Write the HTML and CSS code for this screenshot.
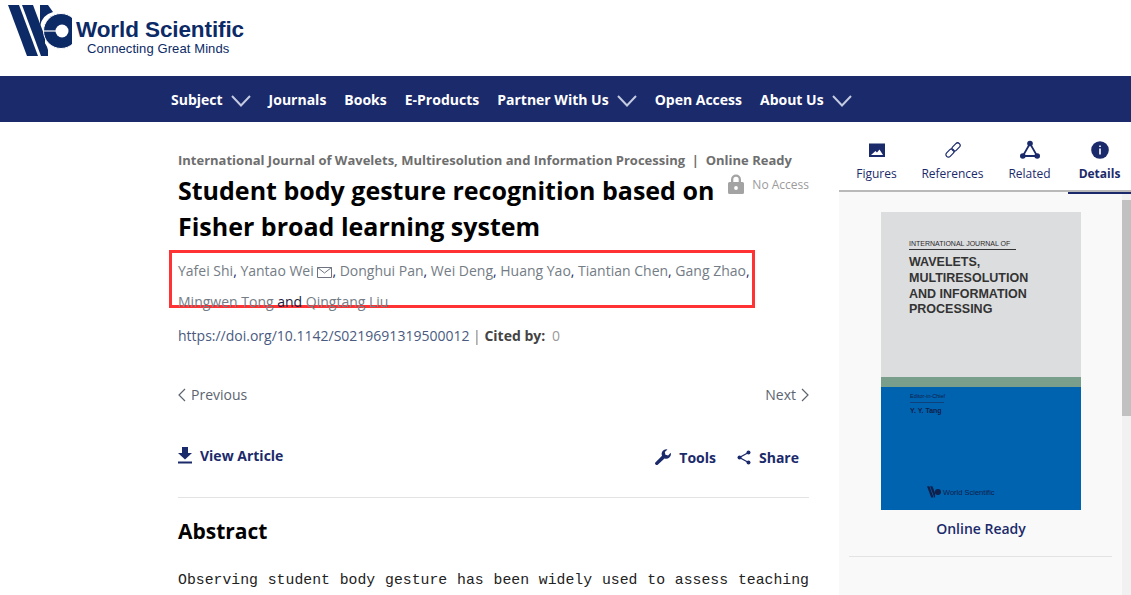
FILE: index.html
```html
<!DOCTYPE html>
<html lang="en">
<head>
<meta charset="utf-8">
<title>Student body gesture recognition based on Fisher broad learning system</title>
<link rel="stylesheet" href="styles.css">
</head>
<body>
<header class="brand">
  <svg class="mark" viewBox="0 0 64 54" width="64" height="54" aria-hidden="true">
    <path fill="#0c2a66" d="M0 1 H11 L30 52 H19 Z"/>
    <path fill="#0c2a66" d="M14 1 H25 L37 33 V52 H33 Z"/>
    <path fill="#0c2a66" d="M32 1 H40 L45 8 A18 18 0 0 0 32 22 Z"/>
    <path fill="#0c2a66" d="M40 52 V46 A18 18 0 0 0 34 36 V52 Z"/>
    <circle cx="53" cy="27" r="17.5" fill="#0c2a66" stroke="#fff" stroke-width="1"/>
    <circle cx="54" cy="27" r="6.5" fill="#fff"/>
    <path stroke="#fff" stroke-width="1.2" d="M35 27 H60"/>
  </svg>
  <div class="wordmark">
    <div class="word-title">World Scientific</div>
    <div class="word-sub">Connecting Great Minds</div>
  </div>
</header>

<nav class="nav">
  <a class="nav-item">Subject <svg class="chev" viewBox="0 0 20 12" width="20" height="12"><path d="M1 1 L10 10.5 L19 1"/></svg></a>
  <a class="nav-item">Journals</a>
  <a class="nav-item">Books</a>
  <a class="nav-item">E-Products</a>
  <a class="nav-item">Partner With Us <svg class="chev" viewBox="0 0 20 12" width="20" height="12"><path d="M1 1 L10 10.5 L19 1"/></svg></a>
  <a class="nav-item">Open Access</a>
  <a class="nav-item">About Us <svg class="chev" viewBox="0 0 20 12" width="20" height="12"><path d="M1 1 L10 10.5 L19 1"/></svg></a>
</nav>

<main class="layout">
  <article class="article">
    <div class="journal">International Journal of Wavelets, Multiresolution and Information Processing&nbsp; |&nbsp; Online Ready</div>
    <div class="title-row">
      <h1 class="title">Student body gesture recognition based on Fisher broad learning system</h1>
      <div class="access">
        <svg viewBox="0 0 16 20" width="16" height="20"><path fill="#a3a3a3" d="M3 8V5.5a5 5 0 0 1 10 0V8h1.5A1.5 1.5 0 0 1 16 9.500V18.500A1.500 1.500 0 0 1 14.500 20H1.500A1.500 1.500 0 0 1 0 18.500V9.500A1.500 1.500 0 0 1 1.500 8ZM5.300 8h5.400V5.500a2.700 2.700 0 0 0-5.400 0Z"/><circle cx="8" cy="14" r="1.900" fill="#fff"/></svg>
        <span>No Access</span>
      </div>
    </div>
    <div class="authors">
      <a>Yafei Shi</a>, <a>Yantao Wei</a>
      <svg class="mail" viewBox="0 0 15 11" width="15" height="11"><path fill="none" stroke="#6d7480" d="M.5.500h14v10H.500ZM.500.500 7.500 6l7-5.500"/></svg>, <a>Donghui Pan</a>, <a>Wei Deng</a>, <a>Huang Yao</a>, <a>Tiantian Chen</a>, <a>Gang Zhao</a>,<br>
      <a>Mingwen Tong</a> <span class="and">and</span> <a>Qingtang Liu</a>
    </div>
    <div class="doi"><a>https://doi.org/10.1142/S0219691319500012</a> <span class="pipe">|</span> <b>Cited by:</b> <span class="count">0</span></div>
    <div class="pager">
      <a class="pager-link"><svg viewBox="0 0 8 14" width="8" height="14"><path d="M7 1 1 7l6 6"/></svg> Previous</a>
      <a class="pager-link">Next <svg viewBox="0 0 8 14" width="8" height="14"><path d="M1 1l6 6-6 6"/></svg></a>
    </div>
    <div class="actions">
      <a class="action view"><svg viewBox="0 0 14 17" width="14" height="17"><path fill="#1b2a6b" d="M4 0h6v6h4L7 12.500 0 6h4ZM0 14.500h14V16.500H0Z"/></svg> View Article</a>
      <div class="tools">
        <a class="action"><svg viewBox="0 0 16 16" width="16" height="16"><path fill="#1b2a6b" d="M15.700 3.700a4.700 4.700 0 0 1-6.200 5.700L3 15.600a1.500 1.500 0 0 1-2.400-2.400L7 6.700A4.700 4.700 0 0 1 12.500.4L9.800 3.100l.6 2.700 2.700.6Z"/></svg> Tools</a>
        <a class="action"><svg viewBox="0 0 14 15" width="14" height="15"><g fill="#1b2a6b"><circle cx="11.500" cy="2.500" r="2"/><circle cx="2.500" cy="7.500" r="2"/><circle cx="11.500" cy="12.500" r="2"/></g><path fill="none" stroke="#1b2a6b" stroke-width="1.300" d="M11.500 2.500l-9 5 9 5"/></svg> Share</a>
      </div>
    </div>
    <h2 class="abstract-head">Abstract</h2>
    <p class="abstract">Observing student body gesture has been widely used to assess teaching performance and learning engagement in the classroom environment today.</p>
  </article>

  <aside class="side">
    <div class="tabs">
      <a class="tab">
        <svg viewBox="0 0 16 16" width="16" height="16"><path fill="#1b2a6b" fill-rule="evenodd" d="M0 1.500h16v13.500H0ZM2 13h12l-3.500-5.500-2.500 3-1.500-1.500Z"/></svg>
        <span>Figures</span>
      </a>
      <a class="tab">
        <svg viewBox="0 0 16 16" width="16" height="16"><g fill="none" stroke="#1b2a6b" stroke-width="1.200" transform="rotate(-45 8 8)"><rect x="-1" y="5.500" width="9.500" height="5" rx="2.500"/><rect x="7.500" y="5.500" width="9.500" height="5" rx="2.500"/></g></svg>
        <span>References</span>
      </a>
      <a class="tab">
        <svg viewBox="0 0 20 19" width="20" height="19"><g fill="#1b2a6b"><circle cx="10" cy="3" r="2.800"/><circle cx="2.800" cy="15.500" r="2.800"/><circle cx="17.200" cy="15.500" r="2.800"/></g><path fill="none" stroke="#1b2a6b" stroke-width="1.800" d="M10 3 2.800 15.500h14.400Z"/></svg>
        <span>Related</span>
      </a>
      <a class="tab active">
        <svg viewBox="0 0 18 18" width="18" height="18"><circle cx="9" cy="9" r="8.800" fill="#1b2a6b"/><path fill="#fff" d="M8.200 4.500h1.600v1.600H8.200ZM8.200 7.500h1.600v6H8.200Z"/></svg>
        <span>Details</span>
      </a>
    </div>
    <div class="side-body">
      <div class="side-content">
        <div class="cover">
          <div class="cover-top">
            <div class="cover-kicker">INTERNATIONAL JOURNAL OF</div>
            <div class="cover-title">WAVELETS,<br>MULTIRESOLUTION<br>AND INFORMATION<br>PROCESSING</div>
          </div>
          <div class="cover-band"></div>
          <div class="cover-bottom">
            <div class="cover-editor">Editor-in-Chief</div>
            <div class="cover-name">Y. Y. Tang</div>
            <div class="cover-logo">
              <svg viewBox="0 0 64 54" width="14" height="12"><path fill="#10204a" d="M0 1H11L30 52H19ZM14 1H25L37 33V52H33Z"/><circle cx="50" cy="27" r="14" fill="#10204a"/></svg>
              <span>World Scientific</span>
            </div>
          </div>
        </div>
        <div class="cover-caption">Online Ready</div>
        <div class="side-rule"></div>
      </div>
      <div class="scrollbar"><div class="scroll-thumb"></div></div>
    </div>
  </aside>
</main>
</body>
</html>
```

FILE: styles.css
```css
* { box-sizing: border-box; }
html, body { margin: 0; height: 595px; overflow: hidden; }
body { background: #fff; font-family: "Open Sans", sans-serif; color: #000; }

.brand { height: 76px; display: flex; align-items: flex-start; padding: 4px 0 0 8px; gap: 4px; }
.mark { flex: none; }
.wordmark { color: #0c2a66; font-family: "Liberation Sans", sans-serif; padding-top: 13px; }
.word-title { font-size: 22.500px; font-weight: 700; line-height: 25px; letter-spacing: -.1px; }
.word-sub { font-size: 13px; line-height: 13px; padding-left: 11px; letter-spacing: .1px; }

.nav { height: 46px; background: #1b2a6b; display: flex; align-items: center; padding-left: 171px; gap: 18px; }
.nav-item { color: #fff; font-size: 14px; font-weight: 700; display: flex; align-items: center; gap: 8px; }
.chev { margin-top: 4px; }
.chev path { fill: none; stroke: #c4cbe0; stroke-width: 2; }

.layout { display: flex; height: 473px; }
.article { width: 839px; padding: 28px 30px 0 178px; flex: none; }
.journal { font-size: 13px; font-weight: 700; color: #6e6e6e; line-height: 20px; white-space: nowrap; }
.title-row { display: flex; justify-content: space-between; align-items: flex-start; }
.title { margin: 2px 0 0; font-size: 25px; font-weight: 700; line-height: 36px; width: 540px; color: #000; }
.access { display: flex; align-items: center; gap: 8px; font-size: 12px; color: #9b9b9b; margin-top: 4px; }

.authors { margin: 6px -9px 0; padding: 2px 6px; width: 586px; height: 58px; border: 3px solid #f33; font-size: 14px; line-height: 31px; color: #1b2a6b; white-space: nowrap; }
.authors a { color: #747c85; }
.and { color: #1b1b40; }
.mail { vertical-align: -2px; }

.doi { margin-top: 18px; font-size: 14px; line-height: 20px; color: #555; }
.doi a { color: #4a5a80; }
.pipe { color: #777; }
.doi b { color: #444; }
.count { color: #999; margin-left: 3px; }

.pager { display: flex; justify-content: space-between; margin-top: 39px; font-size: 14px; line-height: 20px; color: #5b6470; }
.pager-link { display: flex; align-items: center; gap: 5px; }
.pager-link path { fill: none; stroke: #5b6470; stroke-width: 1.200; }

.actions { display: flex; justify-content: space-between; margin-top: 41px; padding-bottom: 18px; border-bottom: 1px solid #e3e3e3; height: 52px; }
.action { display: flex; align-items: center; gap: 8px; font-size: 14px; font-weight: 700; color: #1b2a6b; height: 20px; }
.view { margin-top: -1px; }
.tools { display: flex; gap: 21px; margin: 1px 10px 0 0; }

.abstract-head { margin: 18px 0 0; font-size: 21px; font-weight: 700; line-height: 30px; }
.abstract { margin: 19px 0 0; font-family: "Liberation Mono", monospace; font-size: 14.800px; line-height: 31px; color: #222; text-align: justify; }

.side { flex: 1; display: flex; flex-direction: column; min-width: 0; }
.tabs { height: 70px; margin-left: 0; border-bottom: 2px solid #b9b9b9; display: flex; padding-top: 18px; }
.tab { display: flex; flex-direction: column; align-items: center; gap: 5px; font-size: 12px; line-height: 17px; color: #1b2a6b; height: 52px; position: relative; }
.tab:nth-child(1) { width: 75px; }
.tab:nth-child(2) { width: 77px; }
.tab:nth-child(3) { width: 77px; }
.tab:nth-child(4) { flex: 1; }
.tab svg { height: 20px; }
.tab.active { font-weight: 700; border-bottom: 0; }
.tab.active::after { content: ""; position: absolute; left: 0; right: 0; top: 52px; height: 2px; background: #1b2a6b; }

.side-body { flex: 1; display: flex; background: #f9f9f9; min-height: 0; }
.side-content { flex: 1; padding: 20px 0 0 10px; }
.cover { width: 200px; height: 298px; margin-left: 32px; display: flex; flex-direction: column; }
.cover-top { height: 165px; background: #dcdddf; padding: 27px 0 0 28px; color: #2b2b2b; }
.cover-kicker { font-family: "Liberation Sans", sans-serif; font-size: 7px; line-height: 9px; border-bottom: 1px solid #333; width: 107px; padding-bottom: 1px; white-space: nowrap; }
.cover-title { font-family: "Liberation Sans", sans-serif; font-weight: 700; font-size: 12.500px; line-height: 15.800px; margin-top: 5px; white-space: nowrap; color: #333; }
.cover-band { height: 10px; background: #7a9e8c; }
.cover-bottom { flex: 1; background: #0063b0; padding: 6px 0 0 29px; font-family: "Liberation Sans", sans-serif; color: #10204a; }
.cover-editor { font-size: 5.500px; line-height: 7px; border-bottom: 1px solid #10407a; width: 34px; padding-bottom: 2px; white-space: nowrap; }
.cover-name { font-size: 7px; font-weight: 700; line-height: 9px; margin-top: 3px; }
.cover-logo { display: flex; align-items: center; gap: 2px; font-size: 7.500px; margin: 71px 0 0 17px; white-space: nowrap; }
.cover-caption { width: 200px; margin: 9px 0 0 32px; text-align: center; font-size: 14px; font-weight: 600; line-height: 20px; color: #1b2a6b; }
.side-rule { height: 1px; background: #e3e3e3; margin: 17px 0 0 0; width: 263px; }
.scrollbar { width: 9px; background: #f1f1f1; flex: none; }
.scroll-thumb { height: 216px; background: #c1c1c1; margin-top: 8px; }
```
